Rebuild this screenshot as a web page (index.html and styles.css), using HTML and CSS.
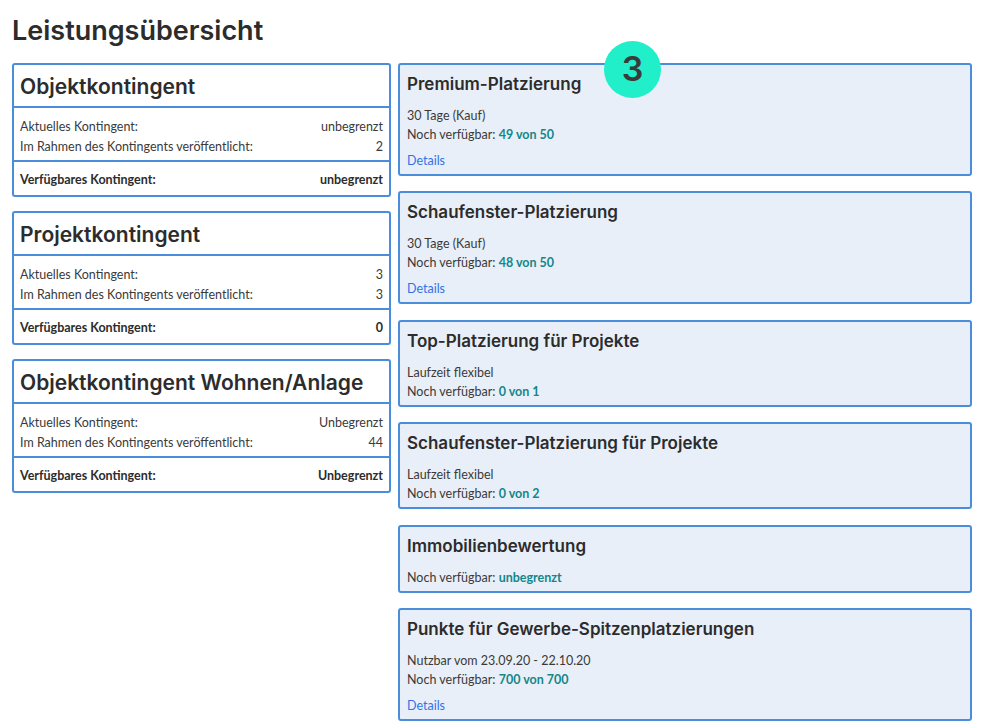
FILE: index.html
```html
<!DOCTYPE html>
<html lang="de">
<head>
<meta charset="utf-8">
<title>Leistungsübersicht</title>
<link rel="stylesheet" href="styles.css">
</head>
<body>
<main class="page">
  <h1 class="page-title">Leistungsübersicht</h1>
  <div class="overview">
    <div class="col-left">
      <section class="quota-card">
        <h2 class="quota-title">Objektkontingent</h2>
        <div class="quota-body">
          <div class="row"><span>Aktuelles Kontingent:</span><span>unbegrenzt</span></div>
          <div class="row"><span>Im Rahmen des Kontingents veröffentlicht:</span><span>2</span></div>
        </div>
        <div class="quota-foot row"><span>Verfügbares Kontingent:</span><span>unbegrenzt</span></div>
      </section>
      <section class="quota-card">
        <h2 class="quota-title">Projektkontingent</h2>
        <div class="quota-body">
          <div class="row"><span>Aktuelles Kontingent:</span><span>3</span></div>
          <div class="row"><span>Im Rahmen des Kontingents veröffentlicht:</span><span>3</span></div>
        </div>
        <div class="quota-foot row"><span>Verfügbares Kontingent:</span><span>0</span></div>
      </section>
      <section class="quota-card">
        <h2 class="quota-title">Objektkontingent Wohnen/Anlage</h2>
        <div class="quota-body">
          <div class="row"><span>Aktuelles Kontingent:</span><span>Unbegrenzt</span></div>
          <div class="row"><span>Im Rahmen des Kontingents veröffentlicht:</span><span>44</span></div>
        </div>
        <div class="quota-foot row"><span>Verfügbares Kontingent:</span><span>Unbegrenzt</span></div>
      </section>
    </div>
    <div class="col-right">
      <span class="step-badge">3</span>
      <section class="product-card">
        <h2 class="product-title">Premium-Platzierung</h2>
        <p class="product-line">30 Tage (Kauf)</p>
        <p class="product-line">Noch verfügbar: <strong class="amount">49 von 50</strong></p>
        <a class="details" href="#">Details</a>
      </section>
      <section class="product-card">
        <h2 class="product-title">Schaufenster-Platzierung</h2>
        <p class="product-line">30 Tage (Kauf)</p>
        <p class="product-line">Noch verfügbar: <strong class="amount">48 von 50</strong></p>
        <a class="details" href="#">Details</a>
      </section>
      <section class="product-card">
        <h2 class="product-title">Top-Platzierung für Projekte</h2>
        <p class="product-line">Laufzeit flexibel</p>
        <p class="product-line">Noch verfügbar: <strong class="amount">0 von 1</strong></p>
      </section>
      <section class="product-card">
        <h2 class="product-title">Schaufenster-Platzierung für Projekte</h2>
        <p class="product-line">Laufzeit flexibel</p>
        <p class="product-line">Noch verfügbar: <strong class="amount">0 von 2</strong></p>
      </section>
      <section class="product-card">
        <h2 class="product-title">Immobilienbewertung</h2>
        <p class="product-line">Noch verfügbar: <strong class="amount">unbegrenzt</strong></p>
      </section>
      <section class="product-card">
        <h2 class="product-title">Punkte für Gewerbe-Spitzenplatzierungen</h2>
        <p class="product-line">Nutzbar vom 23.09.20 - 22.10.20</p>
        <p class="product-line">Noch verfügbar: <strong class="amount">700 von 700</strong></p>
        <a class="details" href="#">Details</a>
      </section>
    </div>
  </div>
</main>
</body>
</html>
```

FILE: styles.css
```css
body {
  margin: 0;
  background: #ffffff;
  color: #333333;
  font-family: Lato, "Open Sans", sans-serif;
}

.page {
  padding: 15px 10px 0 12px;
}

.page-title {
  margin: 0 0 16px;
  font-family: Inter, Lato, sans-serif;
  font-size: 27px;
  line-height: 32px;
  font-weight: 600;
  color: #2c2c2c;
}

.overview {
  display: grid;
  grid-template-columns: 379px 574px;
  column-gap: 7px;
  align-items: start;
}

.col-left {
  display: flex;
  flex-direction: column;
  gap: 14px;
}

.col-right {
  display: flex;
  flex-direction: column;
  gap: 15.4px;
  position: relative;
}

/* Left: quota cards */
.quota-card {
  border: 2px solid #4a8edb;
  border-radius: 3px;
  background: #ffffff;
}

.quota-title {
  margin: 0;
  padding: 8px 6px 5px;
  font-family: Inter, Lato, sans-serif;
  font-size: 21px;
  line-height: 28px;
  font-weight: 600;
  color: #2c2c2c;
  border-bottom: 2px solid #4a8edb;
}

.quota-body {
  padding: 9px 6px 3px;
  border-bottom: 2px solid #4a8edb;
}

.row {
  display: flex;
  justify-content: space-between;
  font-size: 12.5px;
  line-height: 20px;
  color: #3a3a3a;
}

.quota-foot {
  padding: 8px 6px 5px;
  font-weight: 700;
  color: #2c2c2c;
}

/* Right: product cards */
.product-card {
  border: 2px solid #4a8edb;
  border-radius: 3px;
  background: #e9eff8;
  padding: 7px 7px 4px;
}

.product-title {
  margin: 0 0 10px;
  font-family: Inter, Lato, sans-serif;
  font-size: 17px;
  line-height: 24px;
  font-weight: 600;
  color: #2c2c2c;
}

.product-line {
  margin: 0;
  font-size: 12.5px;
  line-height: 19px;
  color: #3a3a3a;
}

.amount {
  color: #13878a;
  font-weight: 700;
}

.details {
  display: block;
  margin-top: 7px;
  font-size: 12.5px;
  line-height: 19px;
  color: #2f74e6;
  text-decoration: none;
}

.step-badge {
  position: absolute;
  left: 206px;
  top: -22px;
  width: 57px;
  height: 57px;
  border-radius: 50%;
  background: #20efca;
  color: #3b3b3b;
  font-family: Inter, Lato, sans-serif;
  font-size: 34px;
  font-weight: 600;
  line-height: 55px;
  text-align: center;
}
```
